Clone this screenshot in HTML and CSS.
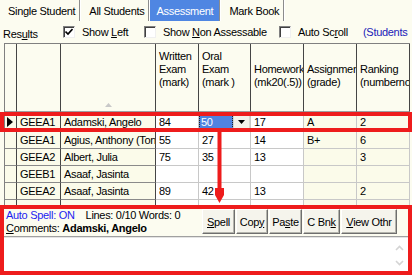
FILE: index.html
```html
<!DOCTYPE html>
<html lang="en">
<head>
    <meta charset="UTF-8">
    <title>Assessment</title>
    <link rel="stylesheet" href="styles.css">
</head>
<body>
    <div class="tabs">
        <span class="tab">Single Student</span>
        <span class="tab">All Students</span>
        <span class="tab active">Assessment</span>
        <span class="tab">Mark Book</span>
    </div>

    <div class="options">
        <span class="opt opt-results"><span>Res<u>u</u>lts</span></span>
        <label class="opt opt-left"><span class="box"><svg width="8" height="8" viewBox="0 0 8 8"><path d="M0.5 3.5 L3 6 L7.5 1" fill="none" stroke="#000" stroke-width="1.6"/></svg></span><span>Show <u>L</u>eft</span></label>
        <label class="opt opt-non"><span class="box"></span><span>Show <u>N</u>on Assessable</span></label>
        <label class="opt opt-scroll"><span class="box"></span><span>Auto Sc<u>r</u>oll</span></label>
        <span class="opt students">(Students</span>
    </div>

    <div class="grid-area">
        <table class="grid">
            <thead>
                <tr>
                    <th class="c-ind"></th>
                    <th class="c-grp"></th>
                    <th class="c-name sort"><svg width="7" height="4" viewBox="0 0 7 4"><path d="M0 4 L3.5 0 L7 4 Z" fill="#c8c8c8"/></svg></th>
                    <th class="c-wr">Written<br>Exam<br>(mark)</th>
                    <th class="c-or">Oral<br>Exam<br>(mark )</th>
                    <th class="c-hw low">Homework<br>(mk20(.5))</th>
                    <th class="c-as low">Assignment<br>(grade)</th>
                    <th class="c-rk low">Ranking<br>(numbernomark)</th>
                </tr>
            </thead>
            <tbody>
                <tr class="first">
                    <td class="fix ind"><svg width="6" height="10" viewBox="0 0 6 10"><path d="M0 0 L6 5 L0 10 Z" fill="#000"/></svg></td>
                    <td class="fix">GEEA1</td>
                    <td class="fix">Adamski, Angelo</td>
                    <td class="plain">84</td>
                    <td class="plain sel">
                        <div class="sel-box">
                            <span class="sel-val">50</span>
                            <span class="drop"><svg width="7" height="4" viewBox="0 0 7 4"><path d="M0 0 L7 0 L3.5 4 Z" fill="#000"/></svg></span>
                        </div>
                    </td>
                    <td class="plain">17</td>
                    <td class="cream">A</td>
                    <td class="cream">2</td>
                </tr>
                <tr>
                    <td class="fix"></td>
                    <td class="fix">GEEA1</td>
                    <td class="fix">Agius, Anthony (Tony)</td>
                    <td class="plain">55</td>
                    <td class="plain">27</td>
                    <td class="plain">14</td>
                    <td class="cream">B+</td>
                    <td class="cream">6</td>
                </tr>
                <tr>
                    <td class="fix"></td>
                    <td class="fix">GEEA2</td>
                    <td class="fix">Albert, Julia</td>
                    <td class="plain">75</td>
                    <td class="plain">35</td>
                    <td class="plain">13</td>
                    <td class="cream"></td>
                    <td class="cream">3</td>
                </tr>
                <tr>
                    <td class="fix"></td>
                    <td class="fix">GEEB1</td>
                    <td class="fix">Asaaf, Jasinta</td>
                    <td class="plain"></td>
                    <td class="plain"></td>
                    <td class="plain"></td>
                    <td class="cream"></td>
                    <td class="cream"></td>
                </tr>
                <tr>
                    <td class="fix"></td>
                    <td class="fix">GEEA2</td>
                    <td class="fix">Asaaf, Jasinta</td>
                    <td class="plain">89</td>
                    <td class="plain">42</td>
                    <td class="plain">13</td>
                    <td class="cream"></td>
                    <td class="cream">2</td>
                </tr>
                <tr>
                    <td class="fix"></td>
                    <td class="fix"></td>
                    <td class="fix"></td>
                    <td class="plain"></td>
                    <td class="plain"></td>
                    <td class="plain"></td>
                    <td class="cream"></td>
                    <td class="cream"></td>
                </tr>
            </tbody>
        </table>

        <!-- annotation: current row and arrow down to the comment box -->
        <div class="row-mark"></div>
        <svg class="arrow" width="11" height="72" viewBox="0 0 11 72">
            <rect x="3.5" y="0" width="4" height="60" fill="#ee1c1c"/>
            <path d="M1 56 L10 56 L10 63 L5.5 71 L1 63 Z" fill="#ee1c1c"/>
        </svg>
    </div>

    <div class="comments">
        <div class="comments-top">
            <div class="comments-info">
                <p><span class="spell-on">Auto Spell: ON</span><span class="counts">Lines: 0/10 Words: 0</span></p>
                <p><u>C</u>omments: <b>Adamski, Angelo</b></p>
            </div>
            <div class="buttons">
                <button class="btn b-spell"><u>S</u>pell</button>
                <button class="btn b-copy">Cop<u>y</u></button>
                <button class="btn b-paste">Pa<u>s</u>te</button>
                <button class="btn b-bank">C Bn<u>k</u></button>
                <button class="btn b-view"><u>V</u>iew Othr</button>
            </div>
        </div>
        <div class="comment-text">
            <div class="text-body"></div>
            <div class="scroll">
                <svg width="9" height="6" viewBox="0 0 9 6"><path d="M1 5 L4.5 1.5 L8 5" fill="none" stroke="#d4d4d4" stroke-width="1.6"/></svg>
                <svg width="9" height="6" viewBox="0 0 9 6"><path d="M1 1 L4.5 4.5 L8 1" fill="none" stroke="#d4d4d4" stroke-width="1.6"/></svg>
            </div>
        </div>
    </div>
</body>
</html>
```

FILE: styles.css
```css
:root {
    --cream: #fcfcf0;
    --cell-cream: #fbfbea;
    --red: #ee1c1c;
    --sel-blue: #4f83e0;
}

* {
    margin: 0;
    padding: 0;
    box-sizing: border-box;
}

body {
    width: 412px;
    height: 275px;
    overflow: hidden;
    font-family: 'Liberation Sans', Arial, sans-serif;
    font-size: 11px;
    letter-spacing: -0.3px;
    color: #000;
    background-color: var(--cream);
}

/* tabs */
.tabs {
    display: flex;
    height: 21px;
}

.tab {
    display: flex;
    align-items: center;
    padding: 0 4px 0 8px;
    border-right: 1px solid #8c8c8c;
    box-shadow: 1px 0 0 #fff;
    margin-right: 1px;
}

.tab.active {
    background-color: #4f86e2;
    color: #fff;
    padding: 0 6px;
}

/* option line */
.options {
    display: flex;
    align-items: center;
    height: 22px;
    padding-left: 3px;
    white-space: nowrap;
}

.opt {
    display: flex;
    align-items: center;
}

.opt-results { width: 60px; padding-top: 3px; }
.opt-left { width: 81px; }
.opt-non { width: 135px; }
.opt-scroll { width: 84px; }

.box {
    width: 12px;
    height: 12px;
    margin-right: 7px;
    background: #fff;
    border-top: 1px solid #808080;
    border-left: 1px solid #808080;
    border-right: 1px solid #f0f0f0;
    border-bottom: 1px solid #f0f0f0;
    box-shadow: inset 1px 1px 0 #404040;
    display: flex;
    align-items: center;
    justify-content: center;
}

.students {
    color: #2020b8;
}

/* grid */
.grid-area {
    position: relative;
    height: 162px;
    overflow: hidden;
}

.grid {
    table-layout: fixed;
    border-collapse: separate;
    border-spacing: 0;
    width: 406px;
    margin-left: 4px;
    border-left: 1px solid #808080;
    border-top: 1px solid #808080;
}

.grid th,
.grid td {
    box-sizing: border-box;
    overflow: hidden;
    white-space: nowrap;
    text-align: left;
    font-weight: normal;
    padding: 0 2px 0 3px;
}

.grid th {
    height: 68px;
    vertical-align: top;
    padding-top: 6px;
    line-height: 13px;
    background-color: var(--cream);
    border-right: 1px solid #454545;
    border-bottom: 1px solid #a0a0a0;
}

.grid th.low {
    padding-top: 19px;
}

.grid th.sort {
    vertical-align: bottom;
    text-align: center;
    padding-bottom: 1px;
}

.c-ind { width: 12px; }
.c-grp { width: 44px; }
.c-name { width: 95px; }
.c-wr { width: 43px; }
.c-or { width: 52px; }
.c-hw { width: 53px; }
.c-as { width: 53px; }
.c-rk { width: 53px; }

.grid td {
    height: 17px;
    line-height: 14px;
}

.grid tr.first td {
    height: 20px;
}

.grid td.fix {
    background-color: var(--cell-cream);
    border-right: 1px solid #454545;
    border-bottom: 1px solid #8a8a8a;
}

.grid td.ind {
    padding: 0 0 0 2px;
}

.grid td.ind svg {
    display: block;
}

.grid td.plain {
    background-color: #fff;
    border-right: 1px solid #c8c8c8;
    border-bottom: 1px solid #c8c8c8;
}

.grid td.cream {
    background-color: var(--cell-cream);
    border-right: 1px solid #c8c8c8;
    border-bottom: 1px solid #c8c8c8;
}

.grid td.sel {
    padding: 0;
}

.sel-box {
    display: flex;
    height: 19px;
    padding: 3px 0 2px;
}

.sel-val {
    flex: 1;
    background-color: var(--sel-blue);
    color: #fff;
    padding-left: 2px;
    outline: 1px dotted #222;
    outline-offset: -1px;
}

.drop {
    width: 17px;
    display: flex;
    align-items: center;
    justify-content: center;
    background-color: #f3f2ea;
    border: 1px solid #d8d8d0;
}

.row-mark {
    position: absolute;
    left: 0;
    right: 0;
    top: 69px;
    height: 20px;
    border: 4px solid var(--red);
}

.arrow {
    position: absolute;
    left: 214px;
    top: 89px;
}

/* comment box */
.comments {
    height: 70px;
    border: 4px solid var(--red);
    display: flex;
    flex-direction: column;
}

.comments-top {
    display: flex;
    justify-content: space-between;
    height: 27px;
    padding-right: 11px;
}

.comments-info {
    padding-left: 2px;
    line-height: 13px;
    white-space: nowrap;
}

.spell-on {
    color: #1c1cf0;
}

.counts {
    margin-left: 11px;
}

.buttons {
    display: flex;
    gap: 1px;
    height: 25px;
}

.btn {
    font-family: inherit;
    font-size: 11px;
    letter-spacing: -0.3px;
    color: #000;
    white-space: nowrap;
    text-align: center;
    background-color: #f5f4ec;
    border: 1px solid;
    border-color: #fff #6e6e6e #6e6e6e #fff;
    box-shadow: inset -1px -1px 0 #b4b4ac;
    padding: 0;
}

.b-spell { width: 33px; }
.b-copy { width: 32px; }
.b-paste { width: 33px; }
.b-bank { width: 37px; }
.b-view { width: 56px; }

.comment-text {
    flex: 1;
    display: flex;
    background-color: #fff;
    border-top: 1px solid #a0a0a0;
    box-shadow: inset 0 1px 0 #e4e4e4;
}

.text-body {
    flex: 1;
}

.scroll {
    width: 14px;
    display: flex;
    flex-direction: column;
    justify-content: space-between;
    align-items: center;
    padding: 8px 4px 5px 0;
}
```
